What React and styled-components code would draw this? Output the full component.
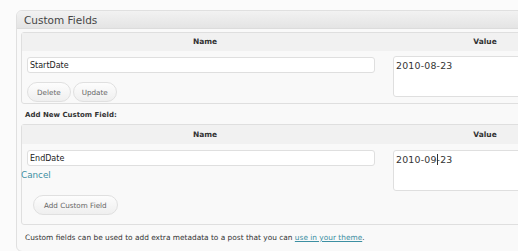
import React from 'react'
import styled, { createGlobalStyle } from 'styled-components'

const Global = createGlobalStyle`
  html, body {
    margin: 0;
    padding: 0;
    background: #fbfbfb;
    overflow: hidden;
  }
  body {
    font-family: "DejaVu Sans", "Liberation Sans", sans-serif;
    color: #333;
  }
`

const Page = styled.div`
  padding: 10px 0 0 16px;
  width: 600px;
`

const Panel = styled.div`
  width: 570px;
  border: 1px solid #e0e0e0;
  border-radius: 6px;
  background: #f9f9f9;
  overflow: hidden;
`

const PanelHead = styled.div`
  height: 17px;
  padding-left: 7px;
  display: flex;
  align-items: center;
  font-size: 10.5px;
  color: #464646;
  background: linear-gradient(#f2f2f2, #e4e4e4);
  border-bottom: 1px solid #dcdcdc;
`

const PanelBody = styled.div`
  padding: 3px 0 9px 4px;
`

const Table = styled.div`
  display: grid;
  grid-template-columns: 366px 194px;
  width: 560px;
  border: 1px solid #dfdfdf;
  border-radius: 3px;
  background: #f9f9f9;
`

const Th = styled.div`
  height: ${p => p.$h || 17}px;
  display: flex;
  align-items: center;
  justify-content: center;
  font-size: 7.5px;
  font-weight: bold;
  color: #333;
  background: #f1f1f1;
  border-bottom: 1px solid #f1f1f1;
`

const Td = styled.div`
  padding: ${p => p.$pad || '5px 0 0 5px'};
  min-height: ${p => p.$h || 0}px;
  box-sizing: border-box;
`

const TextInput = styled.div`
  width: 348px;
  height: 16px;
  box-sizing: border-box;
  border: 1px solid #dfdfdf;
  border-radius: 3px;
  background: #fff;
  font-size: 8px;
  padding-left: 2px;
  display: flex;
  align-items: center;
  color: #222;
`

const ValueBox = styled.div`
  margin-left: 5px;
  height: 41px;
  box-sizing: border-box;
  border: 1px solid #dfdfdf;
  border-radius: 3px;
  background: #fff;
  font-size: 9.4px;
  padding: 3px 0 0 2px;
  color: #333;
  letter-spacing: 0.2px;
`

const Caret = styled.span`
  display: inline-block;
  width: 1px;
  height: 11px;
  background: #333;
  vertical-align: -2px;
  margin: 0 -1px 0 0;
`

const Buttons = styled.div`
  display: flex;
  gap: 2px;
  margin-top: ${p => p.$mt || 9}px;
  margin-left: ${p => p.$ml || 0}px;
`

const Button = styled.div`
  height: 18px;
  padding: 0 ${p => p.$px || 9}px;
  display: flex;
  align-items: center;
  font-size: 7.2px;
  color: #666;
  border: 1px solid #e0e0e0;
  border-radius: 10px;
  background: linear-gradient(#fdfdfd, #efefef);
`

const SubHead = styled.div`
  font-size: 7px;
  font-weight: bold;
  color: #333;
  padding: 7px 0 0 4px;
  height: 13px;
`

const Cancel = styled.div`
  font-size: 8.8px;
  color: #3c8fa2;
  margin: 4px 0 0 -6px;
`

const Note = styled.div`
  font-size: 7.4px;
  color: #333;
  padding: 8px 0 0 4px;
`

const Link = styled.a`
  color: #3c8fa2;
  text-decoration: underline;
`

export default function App() {
  return (
    <Page>
      <Global />
      <Panel>
        <PanelHead>Custom Fields</PanelHead>
        <PanelBody>
          <Table>
            <Th>Name</Th>
            <Th>Value</Th>
            <Td $h={52} $pad="6px 0 0 5px">
              <TextInput>StartDate</TextInput>
              <Buttons>
                <Button>Delete</Button>
                <Button $px={8}>Update</Button>
              </Buttons>
            </Td>
            <Td $pad="5px 0 0 0">
              <ValueBox>2010-08-23</ValueBox>
            </Td>
          </Table>
          <SubHead>Add New Custom Field:</SubHead>
          <Table>
            <Th $h={18}>Name</Th>
            <Th $h={18}>Value</Th>
            <Td $h={80} $pad="6px 0 0 5px">
              <TextInput>EndDate</TextInput>
              <Cancel>Cancel</Cancel>
              <Buttons $mt={15} $ml={6}>
                <Button $px={10}>Add Custom Field</Button>
              </Buttons>
            </Td>
            <Td $pad="6px 0 0 0">
              <ValueBox>2010-09<Caret />-23</ValueBox>
            </Td>
          </Table>
          <Note>
            Custom fields can be used to add extra metadata to a post that you can{' '}
            <Link>use in your theme</Link>.
          </Note>
        </PanelBody>
      </Panel>
    </Page>
  )
}
